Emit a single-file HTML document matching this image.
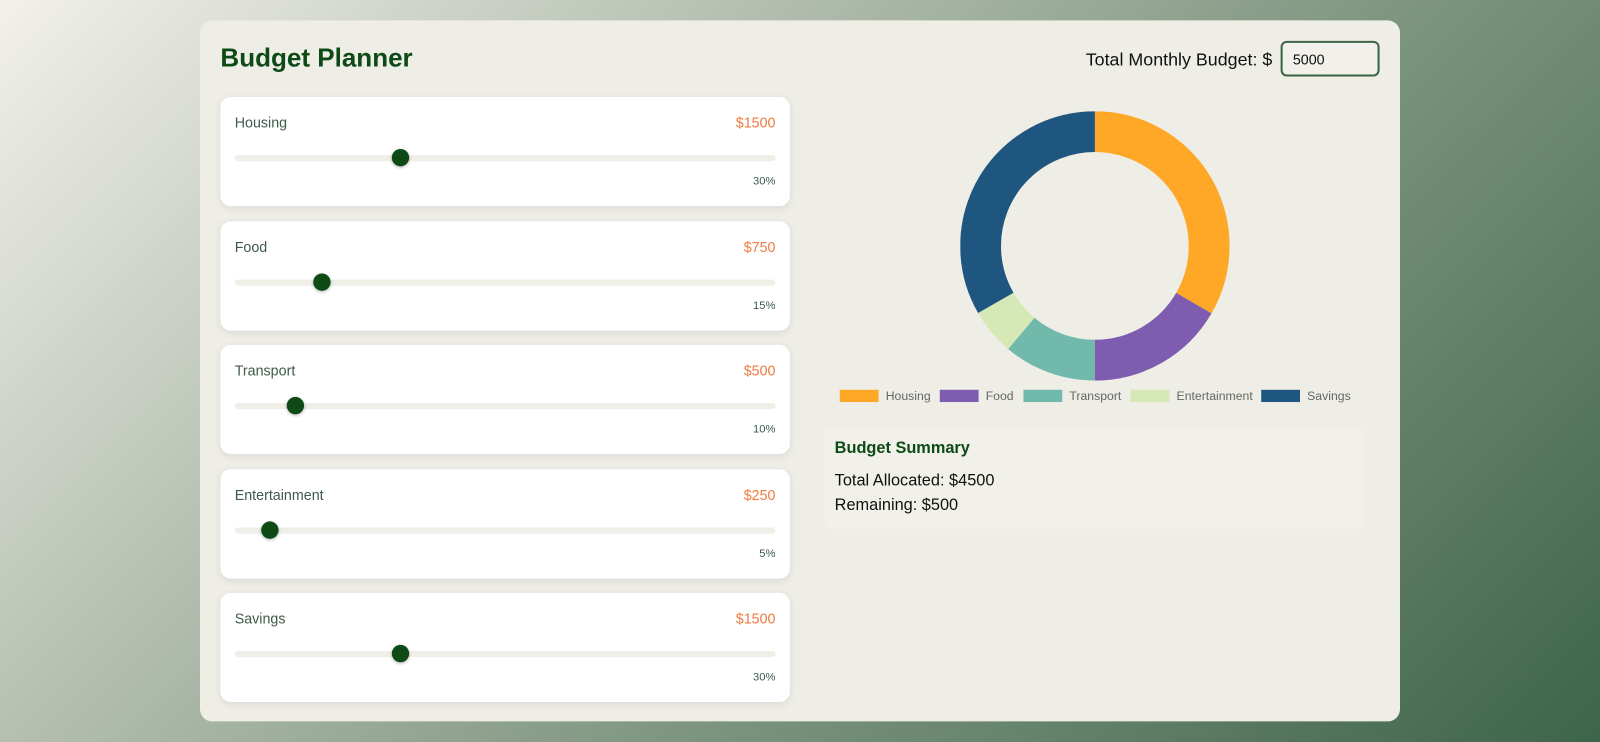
<!DOCTYPE html>
<html><head><meta charset="utf-8"><style>
*{box-sizing:border-box;margin:0;padding:0}
html,body{width:1600px;height:742px;overflow:hidden}
body{font-family:"Liberation Sans",sans-serif;background:linear-gradient(135deg,#f2f1ea 0%,#b9c2b5 30%,#7e9680 60%,#3e6449 100%);position:relative}
.wrap{position:absolute;left:0;top:0;width:1568px;height:727px;transform:scale(1.0204);transform-origin:0 0}
.card{position:absolute;left:196px;top:20px;width:1176px;height:687px;background:#eeede6;border-radius:12px}
h1{position:absolute;left:20px;top:23px;font-size:25.5px;font-weight:bold;color:#0d4a16}
.tb{position:absolute;left:868px;top:28px;font-size:17.5px;color:#111}
.inp{position:absolute;left:1059px;top:20px;width:97px;height:35px;border:2px solid #3c6446;border-radius:6px;background:#f1f0ea;font-size:14px;padding:8px 0 0 10px;color:#111}
.s{position:absolute;left:20px;width:558px;height:107px;background:#fff;border-radius:10px;box-shadow:0 2px 8px rgba(0,0,0,.08)}
.s .n{position:absolute;left:14px;top:17px;font-size:14px;color:#3d5a4a}
.s .v{position:absolute;right:14px;top:17px;font-size:14px;color:#ef7b3e}
.s .t{position:absolute;left:14px;top:57px;width:530px;height:6px;border-radius:3px;background:#efeee7}
.s .k{position:absolute;top:51px;width:17px;height:17px;border-radius:50%;background:#0d4a16;box-shadow:0 1px 3px rgba(0,0,0,.3)}
.s .p{position:absolute;right:14px;top:77px;font-size:11px;color:#3d5a4a}
.lg{position:absolute;top:361px;font-size:12px;color:#666;display:flex;align-items:center}
.lg i{display:inline-block;width:38px;height:12px;margin-right:7px}
.sum{position:absolute;left:612px;top:399px;width:529px;height:100px;background:#f1f0e9;border-radius:8px}
.sum h3{position:absolute;left:10px;top:12px;font-size:16px;color:#0d4a16}
.sum p{position:absolute;left:10px;font-size:16px;color:#111}
</style></head><body>
<div class="wrap">
<div class="card">
<h1>Budget Planner</h1>
<div class="tb">Total Monthly Budget: $</div>
<div class="inp">5000</div>

<div class="s" style="top:75px"><div class="n">Housing</div><div class="v">$1500</div><div class="t"></div><div class="k" style="left:167.5px"></div><div class="p">30%</div></div>
<div class="s" style="top:197px"><div class="n">Food</div><div class="v">$750</div><div class="t"></div><div class="k" style="left:90.5px"></div><div class="p">15%</div></div>
<div class="s" style="top:318px"><div class="n">Transport</div><div class="v">$500</div><div class="t"></div><div class="k" style="left:64.5px"></div><div class="p">10%</div></div>
<div class="s" style="top:440px"><div class="n">Entertainment</div><div class="v">$250</div><div class="t"></div><div class="k" style="left:39.5px"></div><div class="p">5%</div></div>
<div class="s" style="top:561px"><div class="n">Savings</div><div class="v">$1500</div><div class="t"></div><div class="k" style="left:167.5px"></div><div class="p">30%</div></div>

<svg style="position:absolute;left:745px;top:89px" width="264" height="264" viewBox="0 0 264 264">
<g transform="rotate(-90 132 132)" fill="none" stroke-width="40">
<circle cx="132" cy="132" r="112" stroke="#ffa726" stroke-dasharray="234.57 703.72" stroke-dashoffset="0"/>
<circle cx="132" cy="132" r="112" stroke="#7e5caf" stroke-dasharray="117.29 703.72" stroke-dashoffset="-234.57"/>
<circle cx="132" cy="132" r="112" stroke="#71b9ab" stroke-dasharray="78.19 703.72" stroke-dashoffset="-351.86"/>
<circle cx="132" cy="132" r="112" stroke="#d6e8b5" stroke-dasharray="39.1 703.72" stroke-dashoffset="-430.05"/>
<circle cx="132" cy="132" r="112" stroke="#1f5680" stroke-dasharray="234.57 703.72" stroke-dashoffset="-469.15"/>
</g></svg>

<div class="lg" style="left:627px"><i style="background:#ffa726"></i>Housing</div>
<div class="lg" style="left:725px"><i style="background:#7e5caf"></i>Food</div>
<div class="lg" style="left:807px"><i style="background:#71b9ab"></i>Transport</div>
<div class="lg" style="left:912px"><i style="background:#d6e8b5"></i>Entertainment</div>
<div class="lg" style="left:1040px"><i style="background:#1f5680"></i>Savings</div>

<div class="sum"><h3>Budget Summary</h3><p style="top:44px">Total Allocated: $4500</p><p style="top:68px">Remaining: $500</p></div>
</div>
</div>
</body></html>
